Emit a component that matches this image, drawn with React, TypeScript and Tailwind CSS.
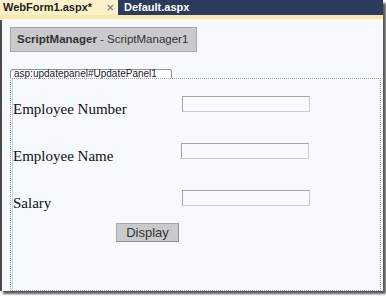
export default function App() {
  const rows = [
    { label: 'Employee Number', inputMl: 'ml-0' },
    { label: 'Employee Name', inputMl: '-ml-px' },
    { label: 'Salary', inputMl: 'ml-0' },
  ];

  return (
    <div className="w-[386px] h-[296px] bg-white overflow-hidden font-['Liberation_Sans',sans-serif]">
      <div className="w-[383px] h-[291px] flex flex-col shadow-[3px_3px_2px_rgba(0,0,0,0.65)]">
        {/* document tabs */}
        <div className="h-[15px] bg-[#2b3b5b] flex items-stretch">
          <div className="w-[118px] bg-[#fcf1c9] flex items-center pl-[3px] text-[11px] font-bold text-[#1e1e1e] leading-none">
            <span>WebForm1.aspx*</span>
            <span className="ml-auto mr-[4px] text-[13px] font-normal text-[#6b6b6b]">×</span>
          </div>
          <div className="flex items-center pl-[6px] text-[11px] font-bold text-white leading-none">
            Default.aspx
          </div>
        </div>
        <div className="h-[4px] bg-[#f7e6ad]" />
        <div className="h-px bg-[#fdfaf0]" />

        {/* designer surface */}
        <div className="flex-1 bg-[#f6f9fe] border-l-2 border-[#4a4a4a] pl-[8px] pr-[2px] flex flex-col">
          <div className="mt-[7px] w-[187px] h-[25px] bg-[#c9cacc] border border-[#a5a7aa] flex items-center pl-[6px] text-[11.5px] text-[#333] leading-none">
            <span className="font-bold">ScriptManager</span>
            <span>&nbsp;- ScriptManager1</span>
          </div>

          <div className="mt-[17px] w-[162px] h-[9px] border border-b-0 border-[#8a96a8] rounded-t-[3px] bg-white flex items-center pl-[3px] text-[10px] leading-none text-[#222]">
            asp:updatepanel#UpdatePanel1
          </div>
          <div className="flex-1 border border-dotted border-[#9aa4b2] flex flex-col pl-px">
            <div className="flex-1 border-l border-[#c4d3e6] flex flex-col pt-[17px]">
              {rows.map((row, i) => (
                <div key={i} className={`flex items-end h-[16px] ${i > 0 ? 'mt-[31px]' : ''}`}>
                  <div className="w-[169px] font-['Liberation_Serif',serif] text-[15px] leading-[15px] text-[#111] -mb-[5px] whitespace-nowrap">
                    {row.label}
                  </div>
                  <div className={`${row.inputMl} w-[128px] h-[16px] bg-[#f8fafd] border border-[#a3a7ac] border-r-[#c9ccd0] border-b-[#c9ccd0]`} />
                </div>
              ))}
              <div className="mt-[17px] ml-[103px] w-[63px] h-[19px] bg-[#c9cacc] border border-[#a5a7aa] border-r-[#8e9094] border-b-[#8e9094] flex items-center justify-center text-[13px] text-[#333] leading-none">
                Display
              </div>
            </div>
          </div>
        </div>
      </div>
    </div>
  );
}
